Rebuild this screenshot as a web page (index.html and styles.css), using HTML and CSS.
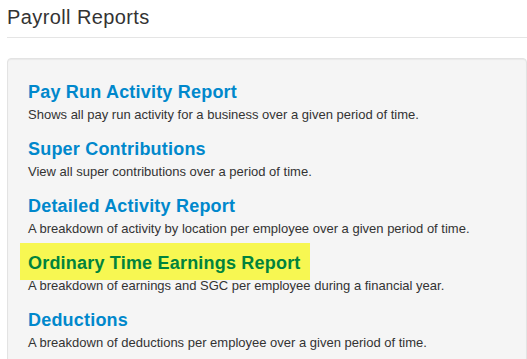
FILE: index.html
```html
<!DOCTYPE html>
<html lang="en">
<head>
  <meta charset="UTF-8" />
  <meta name="viewport" content="width=device-width, initial-scale=1.0" />
  <title>Payroll Reports</title>
  <link rel="stylesheet" href="styles.css">
</head>
<body>
  <div class="container">
    <h1 class="page-title">Payroll Reports</h1>

    <div class="well">
      <div class="report">
        <a href="#" class="report-name">Pay Run Activity Report</a>
        <p class="report-desc">Shows all pay run activity for a business over a given period of time.</p>
      </div>
      <div class="report">
        <a href="#" class="report-name">Super Contributions</a>
        <p class="report-desc">View all super contributions over a period of time.</p>
      </div>
      <div class="report">
        <a href="#" class="report-name">Detailed Activity Report</a>
        <p class="report-desc">A breakdown of activity by location per employee over a given period of time.</p>
      </div>
      <div class="report highlight">
        <a href="#" class="report-name">Ordinary Time Earnings Report</a>
        <p class="report-desc">A breakdown of earnings and SGC per employee during a financial year.</p>
      </div>
      <div class="report">
        <a href="#" class="report-name">Deductions</a>
        <p class="report-desc">A breakdown of deductions per employee over a given period of time.</p>
      </div>
    </div>
  </div>
</body>
</html>
```

FILE: styles.css
```css
* { box-sizing: border-box; }
body {
  margin: 0;
  font-family: "Liberation Sans", Arial, sans-serif;
  background: #fff;
  color: #333;
  overflow: hidden;
}
.container {
  padding-left: 7px;
}
.page-title {
  margin: 6px 0 20px;
  padding-bottom: 9px;
  font-size: 20px;
  line-height: 22px;
  font-weight: normal;
  letter-spacing: 0.4px;
  color: #333;
  border-bottom: 1px solid #e5e5e5;
}
.well {
  background: #f5f5f5;
  border: 1px solid #e3e3e3;
  border-radius: 4px;
  box-shadow: inset 0 1px 1px rgba(0, 0, 0, 0.05);
  padding: 22px 20px 20px;
  min-height: 400px;
}
.report {
  margin-bottom: 14px;
}
.report-name {
  display: block;
  font-size: 18px;
  line-height: 22px;
  font-weight: bold;
  letter-spacing: 0.2px;
  color: #0088cc;
  text-decoration: none;
  margin-bottom: 3px;
}
.report-desc {
  margin: 0;
  font-size: 13px;
  line-height: 18px;
  color: #333;
}
.highlight .report-name {
  display: inline-block;
  background: #f7f752;
  color: #00833d;
  padding: 9px 9px 6px 8px;
  margin: -9px 0 -3px -8px;
}
```
